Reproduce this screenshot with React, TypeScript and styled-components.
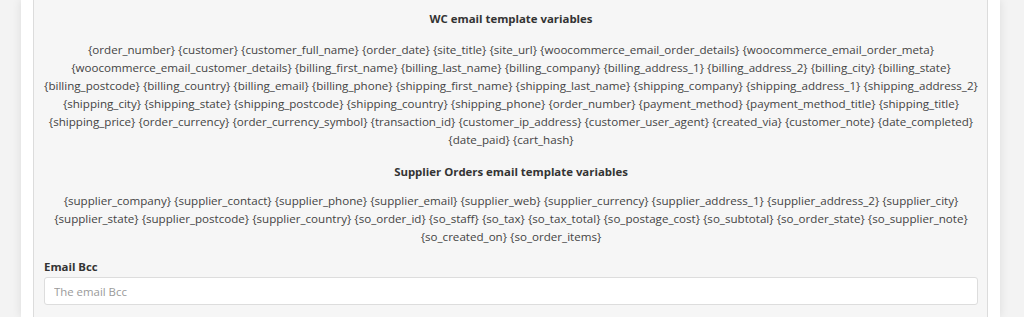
import React from "react";
import styled, { createGlobalStyle } from "styled-components";

const GlobalStyle = createGlobalStyle`
  html, body {
    margin: 0;
    padding: 0;
    background: #f3f3f3;
    font-family: "Open Sans", "Noto Sans", sans-serif;
    overflow: hidden;
  }
`;

const Page = styled.div`
  height: 317px;
  padding: 0 24px 0 21px;
  overflow: hidden;
`;

const Card = styled.div`
  background: #fff;
  height: 100%;
  padding: 0 12px;
  box-shadow: 0 0 9px rgba(0, 0, 0, 0.1);
`;

const Panel = styled.div`
  background: #f6f6f6;
  border: 1px solid #dcdcdc;
  border-top: none;
  border-bottom: none;
  height: 100%;
  padding: 10px 9px 0 10px;
  box-sizing: border-box;
`;

const Heading = styled.div<{ $top?: number }>`
  margin-top: ${(p) => p.$top ?? 0}px;
  text-align: center;
  font-size: 11.4px;
  line-height: 18px;
  font-weight: 700;
  color: #333;
`;

const Vars = styled.p<{ $gap: number }>`
  margin: ${(p) => p.$gap}px 0 0;
  text-align: center;
  font-size: 11.6px;
  line-height: 18px;
  color: #444;
`;

const Label = styled.label`
  display: block;
  margin-top: 12px;
  font-size: 11.4px;
  line-height: 18px;
  font-weight: 700;
  color: #333;
`;

const Input = styled.input`
  display: block;
  box-sizing: border-box;
  width: 100%;
  height: 28px;
  margin-top: 1px;
  padding: 0 9px;
  border: 1px solid #ddd;
  border-radius: 3px;
  background: #fff;
  font-family: inherit;
  font-size: 11.4px;
  color: #444;
  outline: none;

  &::placeholder {
    color: #9a9a9a;
  }
`;

const wcVars = [
  "order_number", "customer", "customer_full_name", "order_date", "site_title", "site_url",
  "woocommerce_email_order_details", "woocommerce_email_order_meta", "woocommerce_email_customer_details",
  "billing_first_name", "billing_last_name", "billing_company", "billing_address_1", "billing_address_2",
  "billing_city", "billing_state", "billing_postcode", "billing_country", "billing_email", "billing_phone",
  "shipping_first_name", "shipping_last_name", "shipping_company", "shipping_address_1", "shipping_address_2",
  "shipping_city", "shipping_state", "shipping_postcode", "shipping_country", "shipping_phone", "order_number",
  "payment_method", "payment_method_title", "shipping_title", "shipping_price", "order_currency",
  "order_currency_symbol", "transaction_id", "customer_ip_address", "customer_user_agent", "created_via",
  "customer_note", "date_completed", "date_paid", "cart_hash",
];

const supplierVars = [
  "supplier_company", "supplier_contact", "supplier_phone", "supplier_email", "supplier_web",
  "supplier_currency", "supplier_address_1", "supplier_address_2", "supplier_city", "supplier_state",
  "supplier_postcode", "supplier_country", "so_order_id", "so_staff", "so_tax", "so_tax_total",
  "so_postage_cost", "so_subtotal", "so_order_state", "so_supplier_note", "so_created_on", "so_order_items",
];

const braces = (list: string[]) => list.map((v) => `{${v}}`).join(" ");

export default function App() {
  return (
    <>
      <GlobalStyle />
      <Page>
        <Card>
          <Panel>
            <Heading>WC email template variables</Heading>
            <Vars $gap={13}>{braces(wcVars)}</Vars>
            <Heading $top={14}>Supplier Orders email template variables</Heading>
            <Vars $gap={11}>{braces(supplierVars)}</Vars>
            <Label htmlFor="email-bcc">Email Bcc</Label>
            <Input id="email-bcc" placeholder="The email Bcc" />
          </Panel>
        </Card>
      </Page>
    </>
  );
}
